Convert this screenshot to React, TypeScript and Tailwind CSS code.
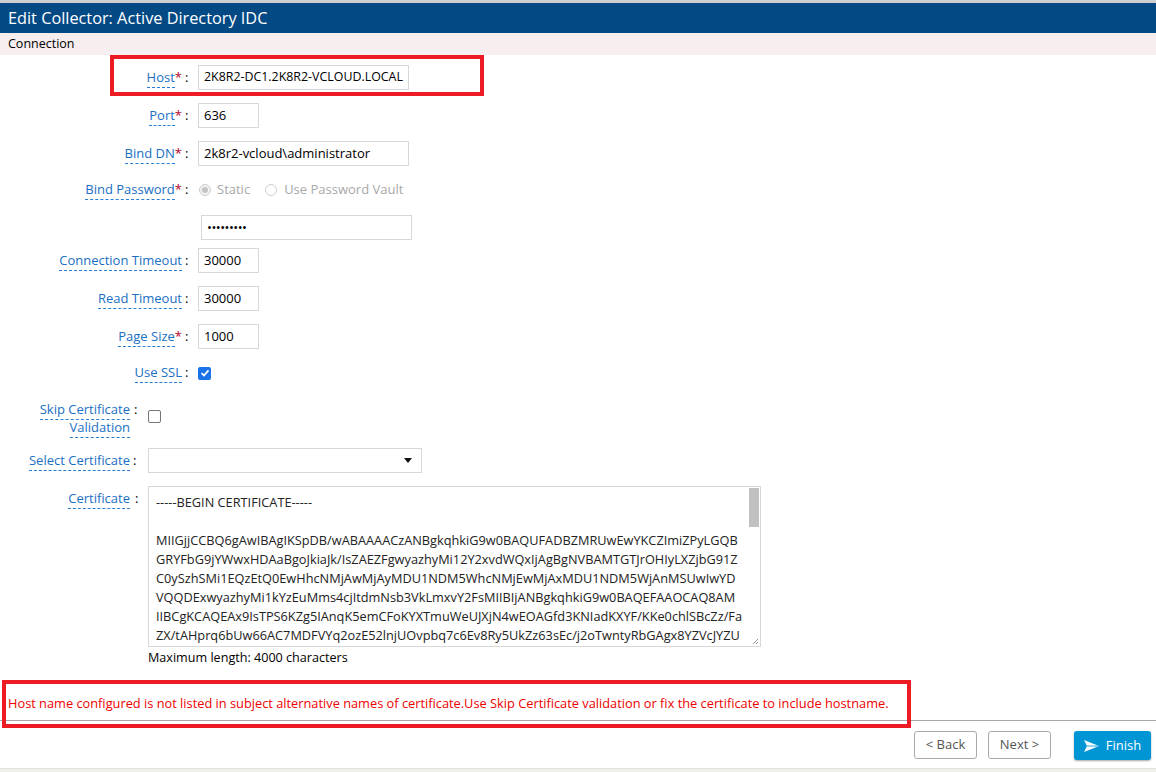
import React from "react";

const LINES = [
  "-----BEGIN CERTIFICATE-----",
  "",
  "MIIGjjCCBQ6gAwIBAgIKSpDB/wABAAAACzANBgkqhkiG9w0BAQUFADBZMRUwEwYKCZImiZPyLGQB",
  "GRYFbG9jYWwxHDAaBgoJkiaJk/IsZAEZFgwyazhyMi12Y2xvdWQxIjAgBgNVBAMTGTJrOHIyLXZjbG91Z",
  "C0ySzhSMi1EQzEtQ0EwHhcNMjAwMjAyMDU1NDM5WhcNMjEwMjAxMDU1NDM5WjAnMSUwIwYD",
  "VQQDExwyazhyMi1kYzEuMms4cjItdmNsb3VkLmxvY2FsMIIBIjANBgkqhkiG9w0BAQEFAAOCAQ8AM",
  "IIBCgKCAQEAx9IsTPS6KZg5IAnqK5emCFoKYXTmuWeUJXjN4wEOAGfd3KNIadKXYF/KKe0chlSBcZz/Fa",
  "ZX/tAHprq6bUw66AC7MDFVYq2ozE52lnjUOvpbq7c6Ev8Ry5UkZz63sEc/j2oTwntyRbGAgx8YZVcJYZU",
];

function Label({ text, req }: { text: string; req?: boolean }) {
  return (
    <span className="whitespace-nowrap">
      <span className="text-[#1a6fc4] border-b border-dashed border-[#2a7fd4] pb-[1px]">{text}</span>
      {req && <span className="text-[#b3002d]">*</span>}
    </span>
  );
}

function Row({
  label,
  req,
  children,
  w = 182,
  className = "",
}: {
  label: React.ReactNode;
  req?: boolean;
  children?: React.ReactNode;
  w?: number;
  className?: string;
}) {
  return (
    <div className={`flex items-center ${className}`}>
      <div className={`${w === 182 ? "w-[182px]" : "w-[130px]"} text-right shrink-0`}>
        {typeof label === "string" ? <Label text={label} req={req} /> : label}
      </div>
      <div className={`${w === 182 ? "w-[16px]" : "w-[18px]"} shrink-0 pl-[3px] text-black`}>:</div>
      {children}
    </div>
  );
}

function Input({ value, wide, small }: { value: string; wide?: boolean; small?: boolean }) {
  return (
    <div
      className={`h-[25px] ${wide ? "w-[211px]" : "w-[61px]"} ${small ? "text-[12.4px]" : ""} border border-[#d8d8d8] bg-white pl-[5px] flex items-center text-black whitespace-nowrap overflow-hidden`}
    >
      {value}
    </div>
  );
}

export default function App() {
  return (
    <div className="relative w-[1156px] h-[772px] bg-white overflow-hidden font-['Open_Sans',sans-serif] text-[13px] text-[#222]">
      {/* top header */}
      <div className="h-[3px] bg-[#cfcfcf]" />
      <div className="h-[30px] bg-[#034a85] flex items-center pl-[8px] text-white text-[16.3px]">
        Edit Collector: Active Directory IDC
      </div>
      <div className="h-[22px] bg-[#f6eeef] flex items-center pl-[8px] text-[12.5px] text-black">Connection</div>

      {/* form */}
      <div className="flex flex-col">
        <Row label="Host" req className="mt-[10px]">
          <Input value="2K8R2-DC1.2K8R2-VCLOUD.LOCAL" wide small />
        </Row>
        <Row label="Port" req className="mt-[13px]">
          <Input value="636" />
        </Row>
        <Row label="Bind DN" req className="mt-[13px]">
          <Input value="2k8r2-vcloud\administrator" wide />
        </Row>
        <Row label="Bind Password" req className="mt-[12px] h-[24px]">
          <div className="flex items-center text-[#a8a8a8]">
            <span className="w-[12px] h-[12px] rounded-full border border-[#cfcfcf] bg-[#f2f2f2] flex items-center justify-center ml-[1px]">
              <span className="w-[6px] h-[6px] rounded-full bg-[#c4c4c4]" />
            </span>
            <span className="ml-[6px]">Static</span>
            <span className="w-[12px] h-[12px] rounded-full border border-[#cfcfcf] bg-white ml-[15px]" />
            <span className="ml-[7px]">Use Password Vault</span>
          </div>
        </Row>
        <div className="flex mt-[13px] pl-[201px]">
          <div className="h-[25px] w-[211px] border border-[#d8d8d8] bg-white pl-[5px] flex items-center text-black text-[13px] tracking-[-0.5px]">
            •••••••••
          </div>
        </div>
        <Row label="Connection Timeout" className="mt-[8px]">
          <Input value="30000" />
        </Row>
        <Row label="Read Timeout" className="mt-[13px]">
          <Input value="30000" />
        </Row>
        <Row label="Page Size" req className="mt-[13px]">
          <Input value="1000" />
        </Row>
        <Row label="Use SSL" className="mt-[12px] h-[24px]">
          <span className="w-[13px] h-[13px] rounded-[2px] bg-[#1a73e8] flex items-center justify-center">
            <svg width="10" height="10" viewBox="0 0 10 10">
              <path d="M1.6 5.2 L4 7.5 L8.5 2.3" stroke="white" strokeWidth="1.8" fill="none" />
            </svg>
          </span>
        </Row>

        <div className="flex items-start mt-[15px] h-[36px]">
          <div className="w-[130px] shrink-0 text-right leading-[18px]">
            <span className="text-[#1a6fc4] border-b border-dashed border-[#2a7fd4] pb-[1px]">Skip Certificate</span>
            <br />
            <span className="text-[#1a6fc4] border-b border-dashed border-[#2a7fd4] pb-[1px]">Validation</span>
          </div>
          <div className="w-[18px] shrink-0 pl-[4px] leading-[18px] text-black">:</div>
          <span className="mt-[10px] w-[13px] h-[13px] rounded-[2px] border border-[#767676] bg-white" />
        </div>

        <Row label="Select Certificate" w={130} className="mt-[12px]">
          <div className="h-[25px] w-[274px] border border-[#d8d8d8] bg-white flex items-center justify-end pr-[9px]">
            <svg width="8" height="5" viewBox="0 0 8 5">
              <path d="M0 0 L8 0 L4 5 Z" fill="#111" />
            </svg>
          </div>
        </Row>

        <div className="flex items-start mt-[13px]">
          <div className="w-[130px] shrink-0 text-right pt-[3px]">
            <Label text="Certificate" />
          </div>
          <div className="w-[18px] shrink-0 pl-[5px] pt-[3px] text-black">:</div>
          <div className="flex flex-col">
            <div className="w-[613px] h-[161px] border border-[#d8d8d8] bg-white flex">
              <div className="flex-1 overflow-hidden pl-[7px] pt-[6px] text-[12.75px] text-[#222]">
                {LINES.map((l, i) => (
                  <div key={i} className="h-[19px] leading-[19px] whitespace-nowrap">
                    {l}
                  </div>
                ))}
              </div>
              <div className="w-[12px] flex flex-col justify-between pr-[1px] pt-[1px]">
                <div className="w-[10px] h-[39px] bg-[#c1c1c1] ml-[1px]" />
                <div className="w-[10px] h-[10px] ml-[1px] mb-[1px] relative">
                  <svg width="10" height="10" viewBox="0 0 10 10">
                    <path d="M9 4 L4 9 M9 7 L7 9" stroke="#9a9a9a" strokeWidth="1" />
                  </svg>
                </div>
              </div>
            </div>
            <div className="leading-[18px] mt-[2px] text-black text-[12.6px]">Maximum length: 4000 characters</div>
          </div>
        </div>

        <div className="mt-[27px] pl-[8px] leading-[18px] text-[12.8px] text-[#ee0000] whitespace-nowrap">
          Host name configured is not listed in subject alternative names of certificate.Use Skip Certificate validation or fix the certificate to include hostname.
        </div>
        <div className="mt-[8px] h-px bg-[#a8a8a8]" />
        <div className="h-[47px] flex items-start justify-end pt-[10px] pr-[5px]">
          <button className="w-[63px] h-[28px] border border-[#aaaaaa] rounded-[3px] bg-white text-[#555] text-[13px]">
            &lt; Back
          </button>
          <button className="ml-[11px] w-[63px] h-[28px] border border-[#aaaaaa] rounded-[3px] bg-white text-[#555] text-[13px]">
            Next &gt;
          </button>
          <button className="ml-[23px] w-[77px] h-[29px] rounded-[3px] bg-[#0096d6] text-white text-[13px] flex items-center justify-center gap-[7px] shadow-[0_1px_2px_rgba(0,0,0,0.35)]">
            <svg width="15" height="12" viewBox="0 0 15 12">
              <path d="M0 0 L15 6 L0 12 L3 6 Z" fill="white" />
              <path d="M3 6 L14 6" stroke="#0096d6" strokeWidth="0.8" />
            </svg>
            Finish
          </button>
        </div>
        <div className="h-[4px] bg-[#f1f1ec] border-t border-[#e2e2dc]" />
      </div>

      {/* annotation boxes */}
      <div className="absolute left-[110px] top-[55px] w-[374px] h-[41px] border-[4px] border-[#ed1c24] pointer-events-none" />
      <div className="absolute left-[2px] top-[680px] w-[909px] h-[48px] border-[4px] border-[#ed1c24] pointer-events-none" />
    </div>
  );
}
